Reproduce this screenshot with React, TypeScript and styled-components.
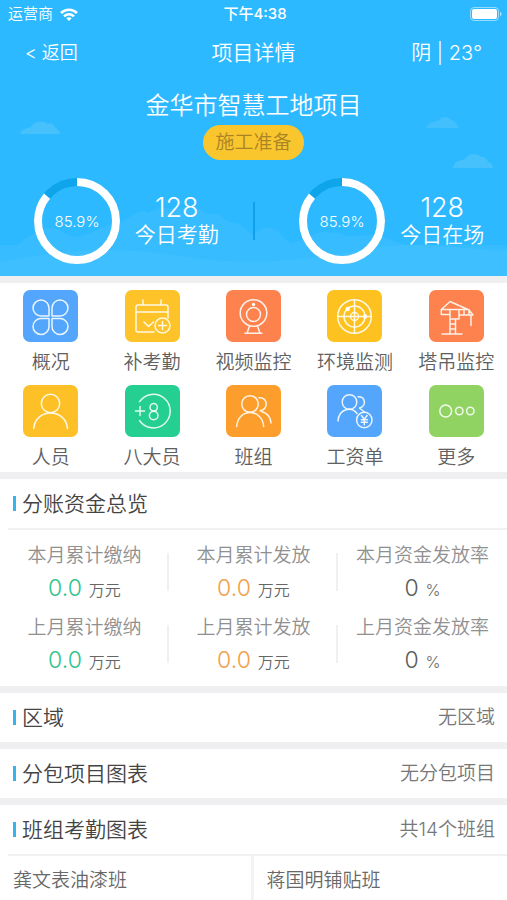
import React from "react";
import styled, { createGlobalStyle } from "styled-components";

const GlobalStyle = createGlobalStyle`
  *, *::before, *::after { box-sizing: border-box; }
  body {
    margin: 0;
    background: #fff;
    color: #555;
    font-family: Inter, "Noto Sans CJK SC", sans-serif;
    font-weight: 350;
    -webkit-font-smoothing: antialiased;
  }
  button { font: inherit; color: inherit; border: 0; background: none; padding: 0; cursor: pointer; }
  h1, h2, p, dl, dd, dt, ul { margin: 0; padding: 0; font-weight: inherit; }
  ul { list-style: none; }
`;

const Header = styled.header`
  position: relative;
  background: #2db9ff;
  color: #fff;
  padding-bottom: 12px;
`;

const Scenery = styled.svg`
  position: absolute;
  inset: 0;
  width: 100%;
  height: 100%;
`;

const HeaderContent = styled.div`
  position: relative;
`;

const StatusBar = styled.div`
  display: grid;
  grid-template-columns: 1fr auto 1fr;
  align-items: center;
  height: 28px;
  padding: 0 5px 0 8px;
  font-size: 15px;
  line-height: 20px;
`;

const Carrier = styled.div`
  display: flex;
  align-items: center;
  gap: 7px;
`;

const Clock = styled.time`
  font-size: 15px;
  font-weight: 500;
`;

const Battery = styled.svg`
  justify-self: end;
`;

const NavBar = styled.nav`
  display: grid;
  grid-template-columns: 1fr auto 1fr;
  align-items: center;
  height: 49px;
  padding: 0 25px;
  font-size: 18px;
  line-height: 28px;
`;

const BackButton = styled.button`
  justify-self: start;
`;

const NavTitle = styled.h1`
  font-size: 21px;
`;

const Weather = styled.span`
  justify-self: end;
  font-size: 20px;
`;

const Project = styled.div`
  display: flex;
  flex-direction: column;
  align-items: center;
  gap: 3px;
  padding-top: 12px;
`;

const ProjectName = styled.h2`
  font-size: 24px;
  line-height: 33px;
`;

const Stage = styled.span`
  padding: 0 12px;
  border-radius: 18px;
  background: #f9c62d;
  color: #a98426;
  font-size: 19px;
  line-height: 35px;
`;

const Stats = styled.div`
  display: grid;
  grid-template-columns: 1fr 2px 1fr;
  align-items: center;
  margin-top: 18px;
`;

const StatDivider = styled.span`
  height: 38px;
  background: #129fe9;
`;

const Stat = styled.div`
  display: flex;
  align-items: center;
  justify-content: center;
  gap: 15px;

  &:last-child { padding-left: 22px; }
`;

const StatText = styled.p`
  display: flex;
  flex-direction: column;
  align-items: center;
  font-size: 21px;
  line-height: 28px;
`;

const StatNumber = styled.span`
  font-size: 27px;
  line-height: 27px;
`;

const Band = styled.div`
  height: 7px;
  background: #efeff1;
`;

const Menu = styled.nav`
  display: grid;
  grid-template-columns: repeat(5, 1fr);
  row-gap: 10px;
  padding: 7px 0 2px;
`;

const MenuButton = styled.button`
  display: flex;
  flex-direction: column;
  align-items: center;
  gap: 9px;
  font-size: 19px;
  line-height: 24px;
  color: #606060;
  white-space: nowrap;
`;

const Tile = styled.span<{ $color: string }>`
  display: block;
  width: 55px;
  height: 52px;
  border-radius: 7px;
  background: ${(p) => p.$color};
`;

const SectionHead = styled.div`
  display: flex;
  align-items: center;
  justify-content: space-between;
  height: 49px;
  padding: 0 12px 0 13px;
`;

const SectionTitle = styled.h2`
  display: flex;
  align-items: center;
  gap: 6px;
  font-size: 21px;
  line-height: 28px;
  color: #444;

  &::before {
    content: "";
    width: 3px;
    height: 15px;
    background: #37b4ec;
  }
`;

const SectionNote = styled.span`
  font-size: 19px;
  line-height: 28px;
  color: #777;
`;

const Rule = styled.hr`
  height: 2px;
  margin: 0 0 0 8px;
  border: 0;
  background: #f1f1f2;
`;

const Funds = styled.dl`
  display: grid;
  grid-template-columns: repeat(3, 1fr);
  row-gap: 8px;
  padding: 10px 0;
`;

const Fund = styled.div`
  display: flex;
  flex-direction: column;
  align-items: center;
  background: linear-gradient(#f0f0f0, #f0f0f0) right center / 2px 38px no-repeat;

  &:nth-child(3n) { background: none; }
`;

const FundLabel = styled.dt`
  font-size: 19px;
  line-height: 32px;
  color: #909090;
`;

const FundValue = styled.dd<{ $color: string }>`
  display: flex;
  align-items: baseline;
  gap: 7px;
  font-size: 23px;
  line-height: 32px;
  color: ${(p) => p.$color};
`;

const Unit = styled.span`
  font-size: 16px;
  line-height: 20px;
  color: #666;
`;

const Teams = styled.ul`
  display: grid;
  grid-template-columns: 1fr 1fr;
`;

const Team = styled.li`
  &:nth-child(odd) { border-right: 3px solid #f3f3f4; }
`;

const TeamButton = styled.button`
  width: 100%;
  padding: 11px 13px 5px;
  text-align: left;
  font-size: 19px;
  line-height: 28px;
  color: #686868;
`;

function Ring({ percent }: { percent: number }) {
  const r = 39;
  const length = 2 * Math.PI * r;
  return (
    <svg width="86" height="86" viewBox="0 0 86 86" role="img" aria-label={`${percent}%`}>
      <circle cx="43" cy="43" r={r} fill="none" stroke="#0ea5ea" strokeWidth="8" />
      <circle
        cx="43"
        cy="43"
        r={r}
        fill="none"
        stroke="#fff"
        strokeWidth="8"
        strokeDasharray={`${(length * percent) / 100} ${length}`}
        transform="rotate(-90 43 43)"
      />
      <text x="43" y="49" textAnchor="middle" fontSize="15" fill="#fff">
        {percent}%
      </text>
    </svg>
  );
}

function HeaderScenery() {
  return (
    <Scenery viewBox="0 0 507 276" preserveAspectRatio="xMidYMax slice" aria-hidden="true">
      <path
        fill="#37bcff"
        d="M0 245H17C22 243 24 238 30 236C40 228 50 226 60 230C68 238 78 238 88 234L106 226L122 222L134 214L143 211L148 213L160 208L200 209L208 214H218L228 222L240 224L254 236C259 227 270 226 278 231C283 236 284 240 292 243L312 236C325 228 338 234 350 236L372 235C388 235 396 245 410 245H507V276H0Z"
      />
      <path fill="#42c1ff" d="M0 262C60 250 120 246 180 256S300 262 360 250S470 252 507 250V276H0Z" opacity=".6" />
      <g fill="#47c1fc">
        <path d="M20 134C22 129 27 128 31 127C34 121 43 120 47 124C51 122 55 125 55 128C58 129 60 132 60 134Z" />
        <path d="M426 128C428 123 433 121 438 121C441 116 448 116 451 120C455 121 458 125 459 128Z" opacity=".8" />
        <path d="M453 168C454 162 459 160 464 160C468 153 478 153 481 157C485 157 487 159 488 162C491 163 493 165 493 168Z" />
      </g>
    </Scenery>
  );
}

type MenuItem = { label: string; color: string; icon: React.ReactNode };

const menu: MenuItem[] = [
  {
    label: "概况",
    color: "#53a6fb",
    icon: (
      <>
        <path d="M26 26H18.3a8 8 0 1 1 7.7-7.7Z" />
        <path d="M29 26h7.7a8 8 0 1 0-7.7-7.7Z" />
        <path d="M26 28.5h-7.7a8 8 0 1 0 7.7 7.7Z" />
        <path d="M29 28.5h7.7a8 8 0 1 1-7.7 7.7Z" />
      </>
    ),
  },
  {
    label: "补考勤",
    color: "#fec328",
    icon: (
      <>
        <path d="M29 42H13a2 2 0 0 1-2-2V17a2 2 0 0 1 2-2h28a2 2 0 0 1 2 2v11M11 22h32M18 10v5M36 10v5M19 32l4.500 4.500 5-4.500" />
        <circle cx="37.500" cy="35.500" r="7.500" />
        <path d="M37.500 31.500v8M33.500 35.500h8" />
      </>
    ),
  },
  {
    label: "视频监控",
    color: "#fd824e",
    icon: (
      <>
        <circle cx="27.500" cy="23" r="13.300" />
        <circle cx="27.500" cy="24.500" r="7" />
        <circle cx="27.500" cy="14.500" r="1" fill="#fff" />
        <path d="M23.500 36l-2.500 7.300M31.500 36l2.500 7.300M19 43.300h17" />
      </>
    ),
  },
  {
    label: "环境监测",
    color: "#fdc21f",
    icon: (
      <>
        <circle cx="27.500" cy="26.500" r="16.800" />
        <circle cx="27.500" cy="26.500" r="10.500" />
        <circle cx="27.500" cy="26.500" r="4" />
        <path d="M27.500 9.700v33.600M10.700 26.500h33.600" />
        <circle cx="20.700" cy="19" r="1.500" fill="#fff" />
        <circle cx="38" cy="26.500" r="1.500" fill="#fff" />
      </>
    ),
  },
  {
    label: "塔吊监控",
    color: "#fd824e",
    icon: (
      <>
        <path d="M12.300 19.500L21 11.500L40 20L44 25H30M12.300 19.500V24.500H21M12.300 19.500H40M21 19.500V29H30V19.500M35 19.500V25M40 20V25M42 25V35.500M21 29V44M26.500 29V44M21 34H26.500M21 39H26.500M13 44H33" />
      </>
    ),
  },
  {
    label: "人员",
    color: "#fdc027",
    icon: (
      <>
        <circle cx="27.500" cy="18.500" r="9.200" />
        <path d="M10.700 43.500C12.500 22.800 42.500 22.800 44.500 43.500" />
      </>
    ),
  },
  {
    label: "八大员",
    color: "#25cf92",
    icon: (
      <>
        <path d="M14.500 16.700A16.800 16.800 0 1 1 14.500 35.500" />
        <path d="M15 21.500v9M10.500 26h9" />
        <circle cx="28.700" cy="22.300" r="3.700" />
        <circle cx="28.700" cy="30.500" r="4.300" />
      </>
    ),
  },
  {
    label: "班组",
    color: "#fd9e2c",
    icon: (
      <>
        <circle cx="24" cy="19" r="8.300" />
        <path d="M10.700 41.500C12 22.800 36 22.800 37.700 41.500" />
        <path d="M33 12.700C42.500 12 42.500 25 34 25.700M35.500 26.500C41 28 44.500 32 45 38" />
      </>
    ),
  },
  {
    label: "工资单",
    color: "#53a6fb",
    icon: (
      <>
        <circle cx="22.500" cy="17" r="7.300" />
        <path d="M11 36C12 23 25 21.500 30 28.500M31 11.700C39 11.500 39.500 21.500 32.500 23M33 23.500L37.500 27" />
        <circle cx="37.300" cy="35" r="7.700" />
        <path d="M34.500 30.500l2.800 3.700 2.800-3.700M37.300 34.200v5.500M34.300 34.700h6M34.300 37.200h6" />
      </>
    ),
  },
  {
    label: "更多",
    color: "#90d363",
    icon: (
      <>
        <circle cx="16.700" cy="26" r="5.900" />
        <circle cx="30.300" cy="26" r="3.700" />
        <circle cx="41.300" cy="26" r="3.700" />
      </>
    ),
  },
];

const green = "#2fc38c";
const orange = "#f2a04a";
const gray = "#5c5c5c";

const funds = [
  { label: "本月累计缴纳", value: "0.0", unit: "万元", color: green },
  { label: "本月累计发放", value: "0.0", unit: "万元", color: orange },
  { label: "本月资金发放率", value: "0", unit: "%", color: gray },
  { label: "上月累计缴纳", value: "0.0", unit: "万元", color: green },
  { label: "上月累计发放", value: "0.0", unit: "万元", color: orange },
  { label: "上月资金发放率", value: "0", unit: "%", color: gray },
];

export default function App() {
  return (
    <>
      <GlobalStyle />
      <Header>
        <HeaderScenery />
        <HeaderContent>
          <StatusBar>
            <Carrier>
              运营商
              <svg width="18" height="13" viewBox="0 0 18 13" fill="none" stroke="#fff" strokeWidth="2.600" aria-hidden="true">
                <path d="M1 5C5.500 .6 12.500 .6 17 5" />
                <path d="M4 8.400C7 5.600 11 5.600 14 8.400" />
                <path d="M9 13L6.300 10.300C7.800 8.900 10.200 8.900 11.700 10.300Z" fill="#fff" stroke="none" />
              </svg>
            </Carrier>
            <Clock>下午4:38</Clock>
            <Battery width="32" height="14" viewBox="0 0 32 14" aria-hidden="true">
              <rect x=".5" y=".5" width="28" height="13" rx="3.500" fill="none" stroke="#fff" opacity=".5" />
              <rect x="2" y="2" width="25" height="10" rx="2" fill="#fff" />
              <path d="M30 5C32 5.500 32 8.500 30 9Z" fill="#fff" opacity=".6" />
            </Battery>
          </StatusBar>
          <NavBar>
            <BackButton type="button">&lt; 返回</BackButton>
            <NavTitle>项目详情</NavTitle>
            <Weather>阴 | 23°</Weather>
          </NavBar>
          <Project>
            <ProjectName>金华市智慧工地项目</ProjectName>
            <Stage>施工准备</Stage>
          </Project>
          <Stats>
            <Stat>
              <Ring percent={85.9} />
              <StatText>
                <StatNumber>128</StatNumber>
                今日考勤
              </StatText>
            </Stat>
            <StatDivider />
            <Stat>
              <Ring percent={85.9} />
              <StatText>
                <StatNumber>128</StatNumber>
                今日在场
              </StatText>
            </Stat>
          </Stats>
        </HeaderContent>
      </Header>
      <Band />
      <main>
        <Menu>
          {menu.map((item) => (
            <MenuButton type="button" key={item.label}>
              <Tile $color={item.color}>
                <svg
                  width="55"
                  height="52"
                  viewBox="0 0 55 52"
                  fill="none"
                  stroke="#fff"
                  strokeOpacity=".88"
                  strokeWidth="1.500"
                  strokeLinecap="round"
                  strokeLinejoin="round"
                  aria-hidden="true"
                >
                  {item.icon}
                </svg>
              </Tile>
              {item.label}
            </MenuButton>
          ))}
        </Menu>
        <Band />
        <section>
          <SectionHead>
            <SectionTitle>分账资金总览</SectionTitle>
          </SectionHead>
          <Rule />
          <Funds>
            {funds.map((fund) => (
              <Fund key={fund.label}>
                <FundLabel>{fund.label}</FundLabel>
                <FundValue $color={fund.color}>
                  {fund.value}
                  <Unit>{fund.unit}</Unit>
                </FundValue>
              </Fund>
            ))}
          </Funds>
        </section>
        <Band />
        <SectionHead>
          <SectionTitle>区域</SectionTitle>
          <SectionNote>无区域</SectionNote>
        </SectionHead>
        <Band />
        <SectionHead>
          <SectionTitle>分包项目图表</SectionTitle>
          <SectionNote>无分包项目</SectionNote>
        </SectionHead>
        <Band />
        <section>
          <SectionHead>
            <SectionTitle>班组考勤图表</SectionTitle>
            <SectionNote>共14个班组</SectionNote>
          </SectionHead>
          <Rule />
          <Teams>
            <Team>
              <TeamButton type="button">龚文表油漆班</TeamButton>
            </Team>
            <Team>
              <TeamButton type="button">蒋国明铺贴班</TeamButton>
            </Team>
          </Teams>
        </section>
      </main>
    </>
  );
}
